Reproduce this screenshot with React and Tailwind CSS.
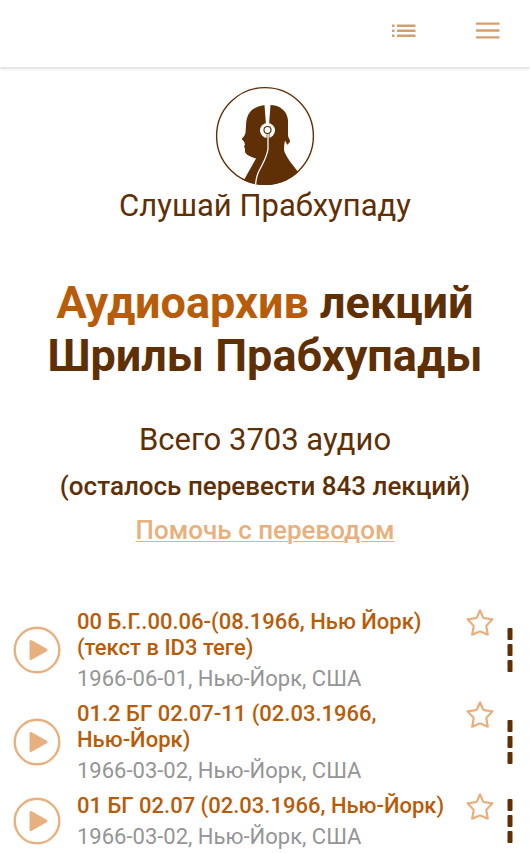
const lectures = [
  { title: '00 Б.Г..00.06-(08.1966, Нью Йорк) (текст в ID3 теге)', info: '1966-06-01, Нью-Йорк, США' },
  { title: '01.2 БГ 02.07-11 (02.03.1966,', place: 'Нью-Йорк)', info: '1966-03-02, Нью-Йорк, США' },
  { title: '01 БГ 02.07 (02.03.1966,', place: 'Нью-Йорк)', info: '1966-03-02, Нью-Йорк, США' },
];

function ListIcon() {
  return (
    <svg width="24" height="14" viewBox="0 0 24 14" fill="#d29f6f" aria-hidden="true">
      <path d="M0 .5h2.5v2.5H0zM5 .5h18.5v2.5H5zM0 5.5h2.5v2.5H0zM5 5.5h18.5v2.5H5zM0 10.5h2.5v2.5H0zM5 10.5h18.5v2.5H5z" />
    </svg>
  );
}

function MenuIcon() {
  return (
    <svg width="24" height="17" viewBox="0 0 24 17" fill="#d29f6f" aria-hidden="true">
      <path d="M0 .5h23.5v2.300H0zM0 7.200h23.5v2.600H0zM0 14.200h23.5v2.300H0z" />
    </svg>
  );
}

function Logo() {
  return (
    <svg width="100" height="100" viewBox="0 0 100 100" aria-hidden="true">
      <defs>
        <clipPath id="disc"><circle cx="50" cy="50" r="49" /></clipPath>
      </defs>
      <circle cx="50" cy="50" r="48.4" fill="#fff" stroke="#5f2f05" strokeWidth="1.4" />
      <g clipPath="url(#disc)">
        <path
          fill="#5f2f05"
          d="M31 40C31 31 34 25 40 22C44 19.500 50 19 55 19C65 19 72 25 73 34L73 49C73 52 75 53 75 55C75 57 73 57 73 59C71.500 58 71 56 70 54.500C69 59 68.500 64 70 67C73 74 79 80 83 86L83 100L20 100L29.500 93L41 72.500C36 71 31 69 30 66L30 62.500L29 60.500L30 58.500L29 55.500L27 53.500C26.500 52 29 51 30 48.500C31 46 30.500 43 31 40Z"
        />
        <path fill="#fff" d="M49.500 19h6l-1.500 20h-3z" />
        <circle cx="52.500" cy="44.500" r="7.500" fill="#fff" />
        <circle cx="52.500" cy="44" r="3.500" fill="#fff" stroke="#5f2f05" strokeWidth="1.200" />
        <path d="M53 48L53 63C52 71 48 77 45 83C42 88 41 93 40.500 99" fill="none" stroke="#fff" strokeWidth="1.300" />
        <path d="M52 47.500v4.500M54.200 47.500v4.500" fill="none" stroke="#5f2f05" strokeWidth=".7" />
      </g>
    </svg>
  );
}

function PlayIcon() {
  return (
    <svg width="48" height="48" viewBox="0 0 48 48" aria-hidden="true">
      <circle cx="24" cy="24" r="22.300" fill="none" stroke="#e8b07e" strokeWidth="2.400" />
      <path d="M18 15.500v17l15-8.500z" fill="#e8b07e" stroke="#e8b07e" strokeWidth="3" strokeLinejoin="round" />
    </svg>
  );
}

function StarIcon() {
  return (
    <svg width="30" height="30" viewBox="0 0 30 30" aria-hidden="true">
      <path
        d="M15 2.300L18 9.200Q18.400 10 19.300 10.200L27.500 11.300L21.800 17.200Q21.200 17.900 21.400 18.800L22.800 26.700L16 23.800Q15 23.400 14 23.800L7.200 26.700L8.600 18.800Q8.800 17.900 8.200 17.200L2.500 11.300L10.700 10.200Q11.600 10 12 9.200Z"
        fill="none" stroke="#e8b07e" strokeWidth="2.200" strokeLinejoin="round"
      />
    </svg>
  );
}

function MoreIcon() {
  return (
    <svg width="6" height="44" viewBox="0 0 6 44" fill="#5f2f05" aria-hidden="true">
      <rect x=".5" width="5" height="12" rx="1" />
      <rect x=".5" y="16" width="5" height="12" rx="1" />
      <rect x=".5" y="32" width="5" height="12" rx="1" />
    </svg>
  );
}

function Lecture({ title, place, info }) {
  return (
    <li className="flex items-center">
      <button type="button" aria-label="Слушать" className="mr-4 shrink-0"><PlayIcon /></button>
      <div className="min-w-0 flex-1 py-px">
        <h2 className="text-[22px] leading-[26px] font-medium text-[#b85c0a]">
          {title} {place && <span className="whitespace-nowrap">{place}</span>}
        </h2>
        <p className="pt-1.5 text-[22px] leading-6 text-[#959595]">{info}</p>
      </div>
      <button type="button" aria-label="В избранное" className="shrink-0 self-start"><StarIcon /></button>
      <button type="button" aria-label="Ещё" className="ml-3 shrink-0"><MoreIcon /></button>
    </li>
  );
}

export default function App() {
  return (
    <div className="min-h-screen bg-white font-[Roboto,sans-serif] text-[#5f2f05]">
      <header className="flex h-[68px] items-center justify-end gap-15 border-b border-[#e6e6e6] pr-[30px] pb-[6px] shadow-sm">
        <button type="button" aria-label="Список"><ListIcon /></button>
        <button type="button" aria-label="Меню"><MenuIcon /></button>
      </header>
      <main>
        <section className="flex flex-col items-center px-4 pt-[18px] text-center">
          <Logo />
          <p className="text-[31px] leading-10">Слушай Прабхупаду</p>
          <h1 className="mt-[50px] text-[45px] leading-[53px] font-bold">
            <span className="text-[#b85c0a]">Аудиоархив</span> лекций
            <br />
            Шрилы Прабхупады
          </h1>
          <p className="mt-[38px] text-[31px] leading-10">Всего 3703 аудио</p>
          <p className="mt-1.5 text-[26px] leading-10 font-medium">(осталось перевести 843 лекций)</p>
          <a href="#help" className="mt-1 text-[26px] leading-10 font-medium text-[#e8b07e] underline decoration-1 underline-offset-2">Помочь с переводом</a>
        </section>
        <ul className="mt-[58px] flex flex-col gap-2 pr-[17px] pl-[13px]">
          {lectures.map((lecture) => (
            <Lecture key={lecture.title} title={lecture.title} place={lecture.place} info={lecture.info} />
          ))}
        </ul>
      </main>
    </div>
  );
}
